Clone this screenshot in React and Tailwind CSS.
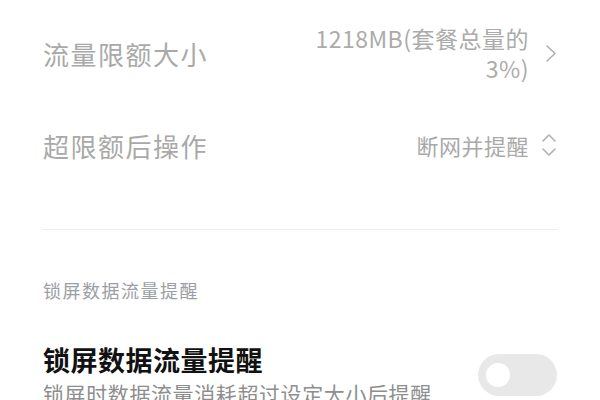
import React, { useState } from 'react';

const font = { fontFamily: '"Noto Sans CJK SC", "Noto Sans", sans-serif' };

const ChevronRight = () => (
    <svg width="12" height="19" viewBox="0 0 12 19" fill="none" className="shrink-0">
        <path d="M2 2l8 7.5L2 17" stroke="#b0b0b0" strokeWidth="1.6" strokeLinecap="round" strokeLinejoin="round" />
    </svg>
);

const UpDown = () => (
    <svg width="16" height="26" viewBox="0 0 16 26" fill="none" className="shrink-0">
        <path d="M2 9l6-6 6 6" stroke="#b0b0b0" strokeWidth="1.6" strokeLinecap="round" strokeLinejoin="round" />
        <path d="M2 17l6 6 6-6" stroke="#b0b0b0" strokeWidth="1.6" strokeLinecap="round" strokeLinejoin="round" />
    </svg>
);

export default function App() {
    const [on, setOn] = useState(false);

    return (
        <div className="w-[600px] h-[400px] overflow-hidden bg-white px-[43px]" style={font}>
            {/* Limit size */}
            <div className="h-[106px] flex items-center justify-between">
                <span className="text-[26px] tracking-[1.5px] text-[#a9a9a9]">流量限额大小</span>
                <div className="flex items-center gap-[16px]">
                    <p className="text-right text-[23px] leading-[30px] tracking-[0.5px] text-[#ababab]">
                        1218MB(套餐总量的<br />3%)
                    </p>
                    <ChevronRight />
                </div>
            </div>

            {/* Action after limit */}
            <div className="h-[78px] flex items-center justify-between">
                <span className="text-[26px] tracking-[1.5px] text-[#a9a9a9]">超限额后操作</span>
                <div className="flex items-center gap-[12px]">
                    <span className="text-[22px] tracking-[0.5px] text-[#a9a9a9]">断网并提醒</span>
                    <UpDown />
                </div>
            </div>

            <div className="mt-[45px] border-t border-[#ececec]" />

            <div className="mt-[48px] text-[18px] leading-[24px] tracking-[1.5px] text-[#9b9ea4]">锁屏数据流量提醒</div>

            <div className="mt-[41px] flex items-center justify-between">
                <div>
                    <div className="text-[27px] leading-[34px] tracking-[0.5px] font-bold text-[#111]">锁屏数据流量提醒</div>
                    <div className="mt-[2px] text-[21px] leading-[28px] tracking-[0.6px] text-[#8e8e8e]">锁屏时数据流量消耗超过设定大小后提醒</div>
                </div>
                <button
                    onClick={() => setOn(!on)}
                    className={`w-[79px] h-[42px] rounded-full flex items-center px-[8px] shrink-0 ${on ? 'bg-[#3482ff] justify-end' : 'bg-[#e8e8e8] justify-start'}`}
                >
                    <span className="w-[24px] h-[24px] rounded-full bg-white" />
                </button>
            </div>
        </div>
    );
}
